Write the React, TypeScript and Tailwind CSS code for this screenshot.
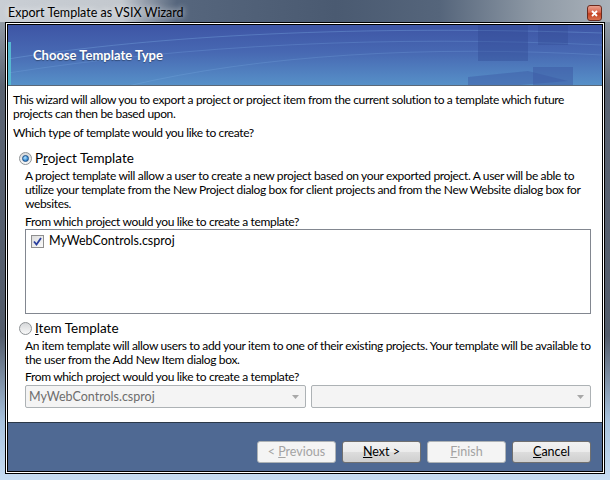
import React from 'react';

const Radio = ({ on }: { on?: boolean }) => (
  <span className="w-[13px] h-[13px] rounded-full border border-[#8f9396] bg-[linear-gradient(#d6d8da,#f8f8f8)] flex items-center justify-center shrink-0">
    {on && <span className="w-[7px] h-[7px] rounded-full border border-[#1c4f86] bg-[radial-gradient(circle_at_40%_35%,#b8e4ff,#3c8fd6_60%,#1d5fa6)]" />}
  </span>
);

const Btn = ({ children, disabled }: { children: React.ReactNode; disabled?: boolean }) => (
  <div
    className={`w-[79px] h-[22px] rounded-[3px] border flex items-center justify-center text-[12.5px] ${
      disabled
        ? 'border-[#adb2b5] bg-[#f4f4f4] text-[#a3a3a3]'
        : 'border-[#707070] bg-[linear-gradient(#f2f2f2_0%,#ebebeb_50%,#dddddd_50%,#cfcfcf_100%)] text-black'
    }`}
  >
    <span className="whitespace-pre">{children}</span>
  </div>
);

const Combo = ({ text }: { text?: string }) => (
  <div className="flex-1 h-[23px] rounded-[2px] border border-[#adb2b5] bg-[#f4f4f4] flex items-center pl-[3px] pr-[6px] text-[12.5px] text-[#6d6d6d]">
    <span className="flex-1">{text}</span>
    <svg width="7" height="4" viewBox="0 0 7 4"><path d="M0 0h7L3.5 4z" fill="#a8a8a8" /></svg>
  </div>
);

export default function App() {
  return (
    <div className="w-[610px] h-[480px] flex flex-col font-['Lato','Noto_Sans',sans-serif] bg-[linear-gradient(to_bottom,#a3acb5_0%,#5b6473_18%,#535c6b_70%,#a9c3de_88%,#c6dcf2_100%)]">
      {/* title bar */}
      <div className="h-[22px] flex items-start pt-[5px] pl-[8px] pr-[8px] bg-[linear-gradient(to_right,#c9ced4_0%,#c3c8ce_20%,#56667d_29%,#4a5a71_55%,#55657b_72%,#8f9aa6_88%,#aab2ba_100%)]">
        <span className="flex-1 text-[12.5px] leading-[16px] text-black [text-shadow:0_0_6px_#fff]">Export Template as VSIX Wizard</span>
        <div className="w-[15px] h-[16px] rounded-[3px] border border-[#6b2a1e] bg-[linear-gradient(#e9a08e_0%,#d8664e_45%,#c3401f_55%,#d9704f_100%)] flex items-center justify-center">
          <svg width="7" height="7" viewBox="0 0 7 7"><path d="M1 1l5 5M6 1l-5 5" stroke="#fff" strokeWidth="1.8" /></svg>
        </div>
      </div>

      <div className="flex-1 mx-[5px] mb-[6px] border border-black bg-white p-px flex">
        <div className="flex-1 border border-black flex flex-col bg-white">
          {/* banner */}
          <div className="relative h-[61px] shrink-0 overflow-hidden bg-[linear-gradient(to_bottom,#3e55a5_0%,#4768b2_45%,#5790c8_100%)] flex items-center pl-[25px] border-b border-[#5b6878]">
            <svg className="absolute inset-0" width="594" height="61" viewBox="0 0 594 61">
              <rect x="0" y="17" width="3" height="44" fill="#56b8cf" />
              <path d="M0 34 C150 10 350 0 594 8" stroke="#7fb0e6" strokeOpacity="0.35" fill="none" />
              <path d="M0 48 C180 20 380 10 594 20" stroke="#7fb0e6" strokeOpacity="0.25" fill="none" />
              <path d="M120 61 C250 30 420 20 594 30" stroke="#8cc0f0" strokeOpacity="0.2" fill="none" />
              <rect x="470" y="0" width="50" height="36" fill="#2f4590" fillOpacity="0.35" />
              <rect x="530" y="0" width="30" height="20" fill="#2f4590" fillOpacity="0.3" />
              <rect x="525" y="42" width="40" height="19" fill="#3a55a0" fillOpacity="0.45" />
              <path d="M460 52 L520 46 L560 56 L500 61 L460 61z" fill="#3b58a3" fillOpacity="0.45" />
            </svg>
            <span className="relative mt-[2px] text-[13px] font-bold text-white [text-shadow:0_1px_1px_rgba(0,0,0,0.35)]">Choose Template Type</span>
          </div>

          {/* content */}
          <div className="flex-1 flex flex-col px-[5px] text-[12px] tracking-[-0.35px] leading-[14px] text-black">
            <p className="mt-[7px]">
              This wizard will allow you to export a project or project item from the current solution to a template which future projects can then be based upon.
            </p>
            <p className="mt-[5px]">Which type of template would you like to create?</p>
            <div className="mt-[10px] h-[16px] flex items-center pl-[6px] gap-[3px]">
              <Radio on />
              <span className="text-[13.5px] tracking-normal">
                P<span className="underline">r</span>oject Template
              </span>
            </div>
            <div className="pl-[12px] pr-[6px]">
              <p className="mt-[3px]">
                A project template will allow a user to create a new project based on your exported project. A user will be able to utilize your template from the New Project dialog box for client projects and from the New Website dialog box for websites.
              </p>
              <p className="mt-[4px]">From which project would you like to create a template?</p>
              <div className="h-[85px] border border-[#828790] bg-white px-[5px] py-[4px]">
                <div className="flex items-center gap-[5px]">
                  <span className="w-[13px] h-[13px] border border-[#8f8f8f] bg-[linear-gradient(135deg,#dcdcdc,#fbfbfb)] flex items-center justify-center">
                    <svg width="9" height="9" viewBox="0 0 9 9"><path d="M1 4.5l2.5 3L8 1" stroke="#2a3f9e" strokeWidth="1.8" fill="none" /></svg>
                  </span>
                  <span className="text-[12.5px] tracking-normal">MyWebControls.csproj</span>
                </div>
              </div>
            </div>
            <div className="mt-[6px] h-[16px] flex items-center pl-[6px] gap-[3px]">
              <Radio />
              <span className="text-[13.5px] tracking-normal">
                <span className="underline">I</span>tem Template
              </span>
            </div>
            <div className="pl-[12px] pr-[6px]">
              <p className="mt-[3px]">
                An item template will allow users to add your item to one of their existing projects. Your template will be available to the user from the Add New Item dialog box.
              </p>
              <p className="mt-[3px]">From which project would you like to create a template?</p>
              <div className="mt-[1px] flex gap-[5px] tracking-normal">
                <Combo text="MyWebControls.csproj" />
                <Combo />
              </div>
            </div>
          </div>

          {/* footer */}
          <div className="h-[49px] shrink-0 border-t border-[#2b3848] bg-[#4f6993] flex justify-end items-start pt-[18px] pr-[11px] gap-[6px]">
            <Btn disabled>
              {'< '}<span className="underline">P</span>revious
            </Btn>
            <Btn>
              <span className="underline">N</span>ext{' >'}
            </Btn>
            <Btn disabled>
              <span className="underline">F</span>inish
            </Btn>
            <Btn>
              <span className="underline">C</span>ancel
            </Btn>
          </div>
        </div>
      </div>
    </div>
  );
}
